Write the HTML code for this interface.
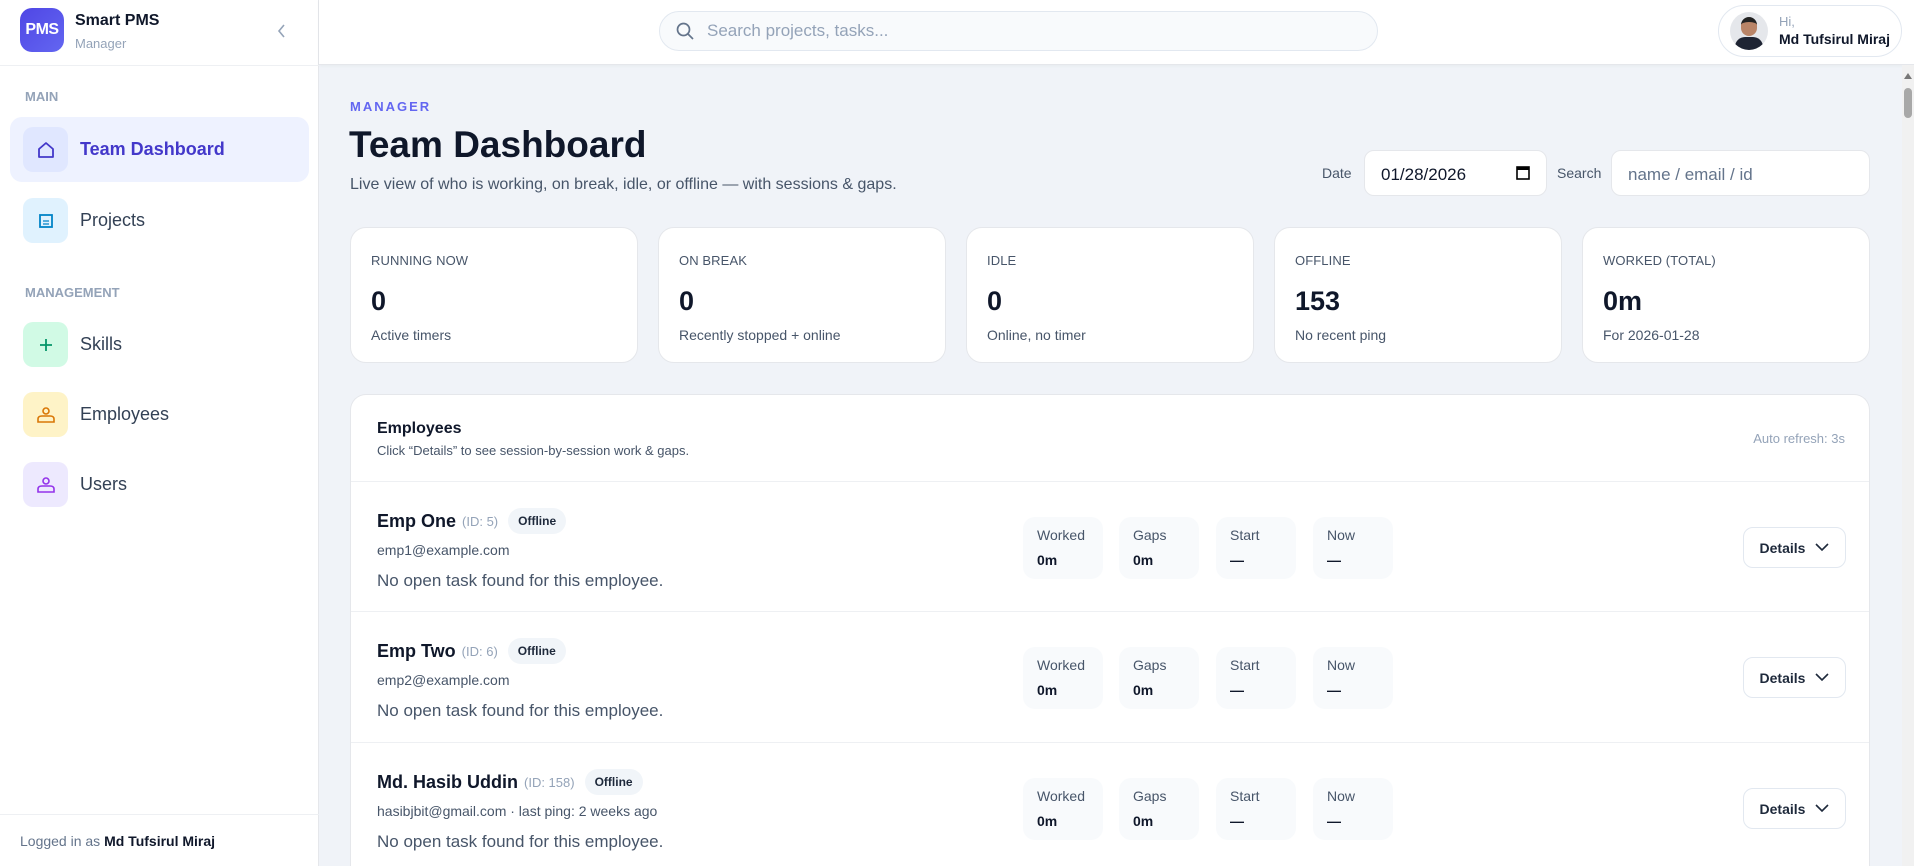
<!DOCTYPE html>
<html style="width:1914px;height:866px;overflow:hidden"><head><meta charset="utf-8"><style>
*{box-sizing:border-box;margin:0;padding:0}
body{width:1914px;height:866px;overflow:hidden;background:#f0f3f8;font-family:"Liberation Sans",sans-serif;color:#0f172a;position:relative}
.abs{position:absolute}
.side{left:0;top:0;width:319px;height:866px;background:#fff;border-right:1px solid #e5e7eb}
.top{left:319px;top:0;width:1595px;height:65px;background:#fff;border-bottom:1px solid #e5e7eb;box-shadow:0 1px 3px rgba(0,0,0,.04)}
.logo{left:20px;top:8px;width:44px;height:44px;border-radius:12px;background:linear-gradient(135deg,#4f46e5,#6366f1);color:#fff;font-weight:bold;font-size:16px;display:flex;align-items:center;justify-content:center;letter-spacing:-.5px}
.sec{font-size:13px;font-weight:bold;color:#94a3b8;left:25px}
.item{left:10px;width:299px;height:65px;border-radius:12px;display:flex;align-items:center;padding-left:13px;font-size:18px;color:#334155}
.ib{width:45px;height:45px;border-radius:10px;display:flex;align-items:center;justify-content:center;margin-right:12px}
.card{background:#fff;border:1px solid #e5e7eb;border-radius:16px}
.stat{top:227px;width:288px;height:136px;padding:25px 20px}
.stat .l{font-size:13px;color:#475569;letter-spacing:.1px}
.stat .n{font-size:27px;font-weight:bold;margin-top:18px;color:#0f172a}
.stat .s{font-size:14px;color:#475569;margin-top:10px}
.row{left:0;width:1520px;height:131px;border-top:1px solid #eef0f3}
.nm{left:26px;top:26px;font-size:18px;font-weight:bold;display:flex;align-items:center}
.nm small{font-size:13px;color:#94a3b8;font-weight:normal;margin-left:6px}
.badge{font-size:12px;font-weight:bold;background:#f1f5f9;border-radius:14px;padding:6px 10px;margin-left:10px;color:#1e293b}
.em{left:26px;top:60px;font-size:14px;color:#475569}
.no{left:26px;top:89px;font-size:17px;color:#475569}
.bx{top:35px;width:80px;height:62px;background:#f8fafc;border-radius:12px;padding:10px 14px;font-size:14px;color:#475569}
.bx b{display:block;color:#0f172a;margin-top:9px;font-size:14px}
.det{left:1392px;top:45px;width:103px;height:41px;border:1px solid #e2e8f0;border-radius:10px;display:flex;align-items:center;justify-content:center;font-size:14px;font-weight:bold;color:#1e293b;background:#fff}
</style></head><body>
<div class="abs side"></div>
<div class="abs logo">PMS</div>
<div class="abs" style="left:75px;top:12px;font-size:16px;font-weight:bold">Smart PMS</div>
<div class="abs" style="left:75px;top:36px;font-size:13px;color:#94a3b8">Manager</div>
<svg class="abs" style="left:275px;top:22px" width="14" height="18" viewBox="0 0 14 18"><path d="M9 3 L4 9 L9 15" fill="none" stroke="#94a3b8" stroke-width="1.6"/></svg>
<div class="abs" style="left:0;top:65px;width:319px;border-top:1px solid #eef0f3"></div>
<div class="abs sec" style="top:89px">MAIN</div>
<div class="abs item" style="top:117px;background:#eef2ff;color:#4338ca;font-weight:bold"><div class="ib" style="background:#e0e7ff"><svg width="20" height="20" viewBox="0 0 20 20"><path d="M3 9 L10 3 L17 9 V17 H3 Z" fill="none" stroke="#4338ca" stroke-width="1.8" stroke-linejoin="round"/></svg></div>Team Dashboard</div>
<div class="abs item" style="top:188px"><div class="ib" style="background:#e0f2fe"><svg width="16" height="16" viewBox="0 0 16 16"><rect x="2" y="2" width="12" height="12" fill="none" stroke="#0284c7" stroke-width="1.8"/><path d="M5 8H11M5 11H11" stroke="#0284c7" stroke-width="1.2"/></svg></div>Projects</div>
<div class="abs sec" style="top:285px">MANAGEMENT</div>
<div class="abs item" style="top:312px"><div class="ib" style="background:#d1fae5"><svg width="16" height="16" viewBox="0 0 16 16"><path d="M8 2V14M2 8H14" stroke="#059669" stroke-width="1.8"/></svg></div>Skills</div>
<div class="abs item" style="top:382px"><div class="ib" style="background:#fef3c7"><svg width="20" height="18" viewBox="0 0 20 18"><circle cx="10" cy="5" r="3" fill="none" stroke="#d97706" stroke-width="1.6"/><path d="M2 16 V13 Q2 10 6 10 H14 Q18 10 18 13 V16 Z M2 16H18" fill="none" stroke="#d97706" stroke-width="1.6"/></svg></div>Employees</div>
<div class="abs item" style="top:452px"><div class="ib" style="background:#ede9fe"><svg width="20" height="18" viewBox="0 0 20 18"><circle cx="10" cy="5" r="3" fill="none" stroke="#9333ea" stroke-width="1.6"/><path d="M2 16 V13 Q2 10 6 10 H14 Q18 10 18 13 V16 Z" fill="none" stroke="#9333ea" stroke-width="1.6"/></svg></div>Users</div>
<div class="abs" style="left:0;top:814px;width:319px;border-top:1px solid #eef0f3"></div>
<div class="abs" style="left:20px;top:833px;font-size:14px;color:#64748b">Logged in as <b style="color:#0f172a">Md Tufsirul Miraj</b></div>

<div class="abs top"></div>
<div class="abs" style="left:659px;top:11px;width:719px;height:40px;border:1px solid #e2e8f0;border-radius:20px;background:#f8fafc;display:flex;align-items:center;padding-left:15px;font-size:17px;color:#94a3b8"><svg width="20" height="20" viewBox="0 0 20 20" style="margin-right:12px"><circle cx="8.5" cy="8.5" r="6" fill="none" stroke="#64748b" stroke-width="1.7"/><path d="M13 13L18 18" stroke="#64748b" stroke-width="1.7"/></svg>Search projects, tasks...</div>
<div class="abs" style="left:1718px;top:5px;width:184px;height:52px;border:1px solid #e2e8f0;border-radius:26px;background:#fff"></div>
<div class="abs" style="left:1730px;top:12px;width:38px;height:38px;border-radius:50%;background:#e5e7eb;overflow:hidden"><div style="position:absolute;left:11px;top:5px;width:16px;height:19px;border-radius:8px;background:#b98467;border-top:5px solid #222"></div><div style="position:absolute;left:5px;top:25px;width:28px;height:16px;border-radius:10px 10px 0 0;background:#1e2433"></div></div>
<div class="abs" style="left:1779px;top:14px;font-size:13px;color:#94a3b8">Hi,</div>
<div class="abs" style="left:1779px;top:31px;font-size:14px;font-weight:bold">Md Tufsirul Miraj</div>
<div class="abs" style="left:1902px;top:65px;width:12px;height:801px;background:#f1f1f1"></div>
<div class="abs" style="left:1904px;top:88px;width:8px;height:30px;background:#a8a8a8;border-radius:4px"></div>
<svg class="abs" style="left:1903px;top:72px" width="10" height="8"><path d="M5 1L9 7H1Z" fill="#777"/></svg>

<div class="abs" style="left:350px;top:99px;font-size:13px;color:#6366f1;letter-spacing:2px;font-weight:bold">MANAGER</div>
<div class="abs" style="left:349px;top:124px;font-size:37px;font-weight:bold;color:#0f172a">Team Dashboard</div>
<div class="abs" style="left:350px;top:176px;font-size:16px;color:#475569">Live view of who is working, on break, idle, or offline — with sessions &amp; gaps.</div>
<div class="abs" style="left:1322px;top:165px;font-size:14px;color:#475569">Date</div>
<div class="abs" style="left:1364px;top:150px;width:183px;height:46px;background:#fff;border:1px solid #e5e7eb;border-radius:10px;padding:14px 16px;font-size:17px">01/28/2026<svg style="position:absolute;right:16px;top:14px" width="14" height="16"><rect x="1" y="2" width="12" height="12" fill="none" stroke="#000" stroke-width="1.6"/><rect x="1" y="2" width="12" height="3" fill="#000"/></svg></div>
<div class="abs" style="left:1557px;top:165px;font-size:14px;color:#475569">Search</div>
<div class="abs" style="left:1611px;top:150px;width:259px;height:46px;background:#fff;border:1px solid #e5e7eb;border-radius:10px;padding:14px 16px;font-size:17px;color:#64748b">name / email / id</div>

<div class="abs card stat" style="left:350px"><div class="l">RUNNING NOW</div><div class="n">0</div><div class="s">Active timers</div></div>
<div class="abs card stat" style="left:658px"><div class="l">ON BREAK</div><div class="n">0</div><div class="s">Recently stopped + online</div></div>
<div class="abs card stat" style="left:966px"><div class="l">IDLE</div><div class="n">0</div><div class="s">Online, no timer</div></div>
<div class="abs card stat" style="left:1274px"><div class="l">OFFLINE</div><div class="n">153</div><div class="s">No recent ping</div></div>
<div class="abs card stat" style="left:1582px"><div class="l">WORKED (TOTAL)</div><div class="n">0m</div><div class="s">For 2026-01-28</div></div>

<div class="abs card" style="left:350px;top:394px;width:1520px;height:472px;overflow:hidden;border-bottom:none;border-radius:16px 16px 0 0">
<div class="abs" style="left:26px;top:25px;font-size:16px;font-weight:bold">Employees</div>
<div class="abs" style="left:26px;top:48px;font-size:13px;color:#475569">Click “Details” to see session-by-session work &amp; gaps.</div>
<div class="abs" style="right:24px;top:36px;font-size:13px;color:#94a3b8">Auto refresh: 3s</div>

<div class="abs row" style="top:86px">
<div class="abs nm">Emp One<small>(ID: 5)</small><span class="badge">Offline</span></div>
<div class="abs em">emp1@example.com</div><div class="abs no">No open task found for this employee.</div>
<div class="abs bx" style="left:672px">Worked<b>0m</b></div><div class="abs bx" style="left:768px">Gaps<b>0m</b></div><div class="abs bx" style="left:865px">Start<b>—</b></div><div class="abs bx" style="left:962px">Now<b>—</b></div>
<div class="abs det">Details<svg style="margin-left:10px" width="14" height="9"><path d="M1 1L7 7L13 1" fill="none" stroke="#1e293b" stroke-width="1.6"/></svg></div></div>

<div class="abs row" style="top:216px">
<div class="abs nm">Emp Two<small>(ID: 6)</small><span class="badge">Offline</span></div>
<div class="abs em">emp2@example.com</div><div class="abs no">No open task found for this employee.</div>
<div class="abs bx" style="left:672px">Worked<b>0m</b></div><div class="abs bx" style="left:768px">Gaps<b>0m</b></div><div class="abs bx" style="left:865px">Start<b>—</b></div><div class="abs bx" style="left:962px">Now<b>—</b></div>
<div class="abs det">Details<svg style="margin-left:10px" width="14" height="9"><path d="M1 1L7 7L13 1" fill="none" stroke="#1e293b" stroke-width="1.6"/></svg></div></div>

<div class="abs row" style="top:347px">
<div class="abs nm">Md. Hasib Uddin<small>(ID: 158)</small><span class="badge">Offline</span></div>
<div class="abs em">hasibjbit@gmail.com · last ping: 2 weeks ago</div><div class="abs no">No open task found for this employee.</div>
<div class="abs bx" style="left:672px">Worked<b>0m</b></div><div class="abs bx" style="left:768px">Gaps<b>0m</b></div><div class="abs bx" style="left:865px">Start<b>—</b></div><div class="abs bx" style="left:962px">Now<b>—</b></div>
<div class="abs det">Details<svg style="margin-left:10px" width="14" height="9"><path d="M1 1L7 7L13 1" fill="none" stroke="#1e293b" stroke-width="1.6"/></svg></div></div>
</div>
</body></html>
